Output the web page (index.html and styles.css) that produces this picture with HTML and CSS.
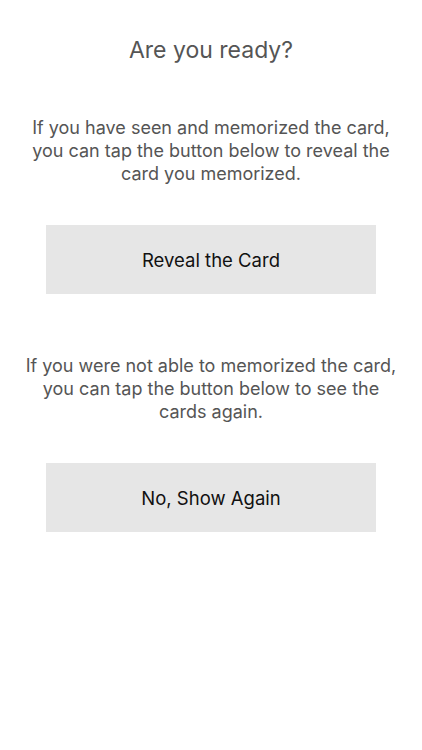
FILE: index.html
```html
<!DOCTYPE html>
<html lang="en">
<head>
	<meta charset="utf-8">
	<meta name="viewport" content="width=device-width, initial-scale=1">
	<title>Are you ready?</title>
	<link rel="stylesheet" href="styles.css">
</head>
<body>
	<div class="page">
		<h1 class="title">Are you ready?</h1>
		<p class="info">If you have seen and memorized the card, you can tap the button below to reveal the card you memorized.</p>
		<a class="button">Reveal the Card</a>
		<p class="info second">If you were not able to memorized the card, you can tap the button below to see the cards again.</p>
		<a class="button">No, Show Again</a>
	</div>
</body>
</html>
```
FILE: styles.css
```css
html,body{margin:0;padding:0;background:#fff;}
body{font-family:Inter,"Liberation Sans",sans-serif;}
.page{display:flex;flex-direction:column;align-items:center;padding:34px 10px 0;}
.title{margin:0;font-size:23px;font-weight:400;line-height:32px;color:#555;}
.info{margin:50px 0 0;width:384px;text-align:center;font-size:18px;line-height:23px;color:#555;}
.info.second{margin-top:60px;}
.button{margin-top:40px;width:330px;height:69px;display:flex;align-items:center;justify-content:center;background:#e6e6e6;color:#111;font-size:18.5px;}
```
